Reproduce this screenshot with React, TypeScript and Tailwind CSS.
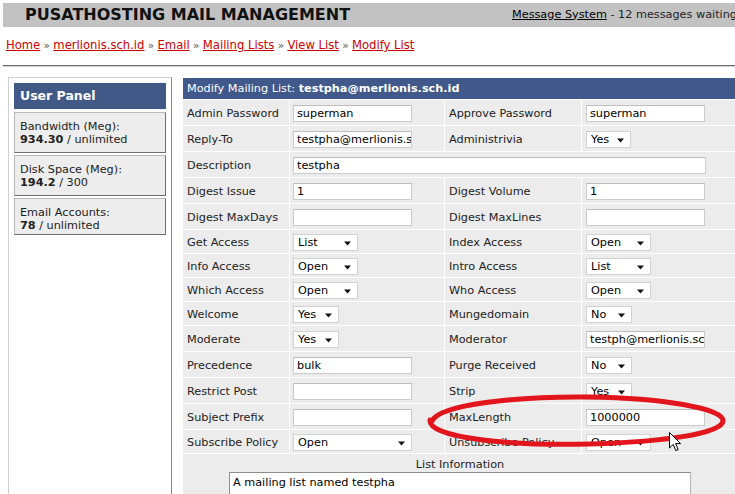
import React from "react";

type Cell =
  | { kind: "text"; value: string; w?: string }
  | { kind: "select"; value: string; w: string };

type Row = {
  h: string;
  l1: string;
  c1: Cell;
  l2?: string;
  c2?: Cell;
  span?: boolean;
};

const Input = ({ value, w = "w-[119px]" }: { value: string; w?: string }) => (
  <div
    className={`${w} h-[17px] bg-white border border-[#cbcbcb] border-t-[#bdbdbd] pl-[3px] leading-[16px] text-black whitespace-nowrap overflow-hidden`}
  >
    {value}
  </div>
);

const Select = ({ value, w }: { value: string; w: string }) => (
  <div
    className={`${w} h-[17px] bg-white border border-[#d2d2d2] pl-[4px] pr-[6px] flex items-center justify-between text-black`}
  >
    <span className="leading-[15px] pt-px">{value}</span>
    <svg width="7" height="5" viewBox="0 0 7 5" className="mt-[3px]">
      <path d="M0 0.5 H7 L3.5 4.5 Z" fill="#111" />
    </svg>
  </div>
);

const renderCell = (c: Cell) =>
  c.kind === "text" ? <Input value={c.value} w={c.w} /> : <Select value={c.value} w={c.w} />;

const t = (value: string, w?: string): Cell => ({ kind: "text", value, w });
const s = (value: string, w: string): Cell => ({ kind: "select", value, w });

const rows: Row[] = [
  { h: "h-[25px]", l1: "Admin Password", c1: t("superman"), l2: "Approve Password", c2: t("superman") },
  { h: "h-[25px]", l1: "Reply-To", c1: t("testpha@merlionis.sch.id"), l2: "Administrivia", c2: s("Yes", "w-[45px]") },
  { h: "h-[25px]", l1: "Description", c1: t("testpha", "w-[413px]"), span: true },
  { h: "h-[25px]", l1: "Digest Issue", c1: t("1"), l2: "Digest Volume", c2: t("1") },
  { h: "h-[25px]", l1: "Digest MaxDays", c1: t(""), l2: "Digest MaxLines", c2: t("") },
  { h: "h-[23px]", l1: "Get Access", c1: s("List", "w-[65px]"), l2: "Index Access", c2: s("Open", "w-[65px]") },
  { h: "h-[23px]", l1: "Info Access", c1: s("Open", "w-[65px]"), l2: "Intro Access", c2: s("List", "w-[65px]") },
  { h: "h-[23px]", l1: "Which Access", c1: s("Open", "w-[65px]"), l2: "Who Access", c2: s("Open", "w-[65px]") },
  { h: "h-[23px]", l1: "Welcome", c1: s("Yes", "w-[46px]"), l2: "Mungedomain", c2: s("No", "w-[46px]") },
  { h: "h-[25px]", l1: "Moderate", c1: s("Yes", "w-[46px]"), l2: "Moderator", c2: t("testph@merlionis.sch.id") },
  { h: "h-[25px]", l1: "Precedence", c1: t("bulk"), l2: "Purge Received", c2: s("No", "w-[46px]") },
  { h: "h-[25px]", l1: "Restrict Post", c1: t(""), l2: "Strip", c2: s("Yes", "w-[46px]") },
  { h: "h-[25px]", l1: "Subject Prefix", c1: t(""), l2: "MaxLength", c2: t("1000000") },
  { h: "h-[23px]", l1: "Subscribe Policy", c1: s("Open", "w-[119px]"), l2: "Unsubscribe Policy", c2: s("Open", "w-[65px]") },
];

const crumbs = ["Home", "merlionis.sch.id", "Email", "Mailing Lists", "View List", "Modify List"];

const StatBox = ({ label, bold, rest, h }: { label: string; bold: string; rest: string; h: string }) => (
  <div
    className={`${h} mt-[2px] bg-[#ededed] border border-[#b9b9b9] border-r-[#6f6f6f] border-b-[#6f6f6f] pl-[5px] pt-[7px] leading-[13px] text-[#222]`}
  >
    <div>{label}</div>
    <div>
      <b>{bold}</b> / {rest}
    </div>
  </div>
);

export default function App() {
  return (
    <div className="w-[735px] h-[494px] overflow-hidden bg-white relative font-['DejaVu_Sans',sans-serif] text-[11.25px] text-[#222]">
      <div className="pl-[3px] pt-[3px] w-[800px]">
        {/* top bar */}
        <div className="h-[24px] bg-[#c2c2c2] flex items-center">
          <div className="w-[509px] pl-[22px] font-bold text-[16px] text-[#111] leading-none">
            PUSATHOSTING MAIL MANAGEMENT
          </div>
          <div className="whitespace-nowrap text-[#222]">
            <span className="underline text-black">Message System</span> - 12 messages waiting
          </div>
        </div>

        {/* breadcrumb */}
        <div className="mt-[11px] h-[14px] leading-[14px] pl-[3px] whitespace-nowrap text-[11.6px]">
          {crumbs.map((c, i) => (
            <span key={c}>
              <span className="underline text-[#cc0000]">{c}</span>
              {i < crumbs.length - 1 && <span className="text-[#555] text-[10.5px]"> » </span>}
            </span>
          ))}
        </div>

        <div className="mt-[13px] w-[740px] h-px bg-[#6a6a6a]" />
        <div className="w-[740px] h-px bg-[#d6d6d6]" />

        {/* main */}
        <div className="mt-[10px] flex">
          <div className="ml-[5px] w-[164px] border border-[#d0d0d0] border-r-[#8a8a8a] p-[5px]">
            <div className="h-[26px] bg-[#415987] flex items-center pl-[6px] pt-px text-white font-bold text-[12.5px]">
              User Panel
            </div>
            <div className="mt-[3px]">
              <StatBox h="h-[41px]" label="Bandwidth (Meg):" bold="934.30" rest="unlimited" />
              <StatBox h="h-[41px]" label="Disk Space (Meg):" bold="194.2" rest="300" />
              <StatBox h="h-[37px]" label="Email Accounts:" bold="78" rest="unlimited" />
            </div>
          </div>

          <div className="ml-[11px] mt-px grid grid-cols-[106px_154px_136px_155px] gap-px bg-white">
            <div className="col-span-4 h-[21px] bg-[#40588a] text-white flex items-center pl-[4px] pt-px">
              Modify Mailing List:&nbsp;<b>testpha@merlionis.sch.id</b>
            </div>
            {rows.map((r) => (
              <React.Fragment key={r.l1}>
                <div className={`${r.h} bg-[#ececec] flex items-center pl-[4px] pt-[3px]`}>{r.l1}</div>
                {r.span ? (
                  <div className={`${r.h} col-span-3 bg-[#ececec] flex items-center pl-[3px] pt-px`}>
                    {renderCell(r.c1)}
                  </div>
                ) : (
                  <>
                    <div className={`${r.h} bg-[#ececec] flex items-center pl-[3px] pt-px`}>{renderCell(r.c1)}</div>
                    <div className={`${r.h} bg-[#ececec] flex items-center pl-[4px] pt-[3px]`}>{r.l2}</div>
                    <div className={`${r.h} bg-[#ececec] flex items-center pl-[4px] pt-px`}>
                      {r.c2 && renderCell(r.c2)}
                    </div>
                  </>
                )}
              </React.Fragment>
            ))}
            <div className="col-span-4 h-[90px] bg-[#ececec] flex flex-col items-center pt-[4px]">
              <div className="leading-[14px]">List Information</div>
              <div className="w-[462px] h-[60px] bg-white border border-[#b5b5b5] border-t-[#8d8d8d] border-l-[#8d8d8d] pl-[3px] pt-[2px] text-black">
                A mailing list named testpha
              </div>
            </div>
          </div>
        </div>
      </div>

      {/* hand-drawn red ellipse */}
      <svg className="absolute left-0 top-0 pointer-events-none" width="735" height="494">
        <path
          d="M432 421 C 440 404, 520 396, 590 397 C 660 398, 724 408, 723 421 C 722 434, 660 442, 590 444 C 510 446, 428 438, 430 420"
          fill="none"
          stroke="#e2141c"
          strokeWidth="5"
          strokeLinecap="round"
        />
      </svg>

      {/* mouse cursor */}
      <svg className="absolute left-[669px] top-[432px]" width="14" height="21" viewBox="0 0 14 21">
        <path
          d="M0.5 0.5 L0.5 16 L4.2 12.4 L6.8 18.6 L9.2 17.6 L6.6 11.6 L11.6 11.6 Z"
          fill="#fff"
          stroke="#000"
          strokeWidth="1"
          strokeLinejoin="round"
        />
      </svg>
    </div>
  );
}
